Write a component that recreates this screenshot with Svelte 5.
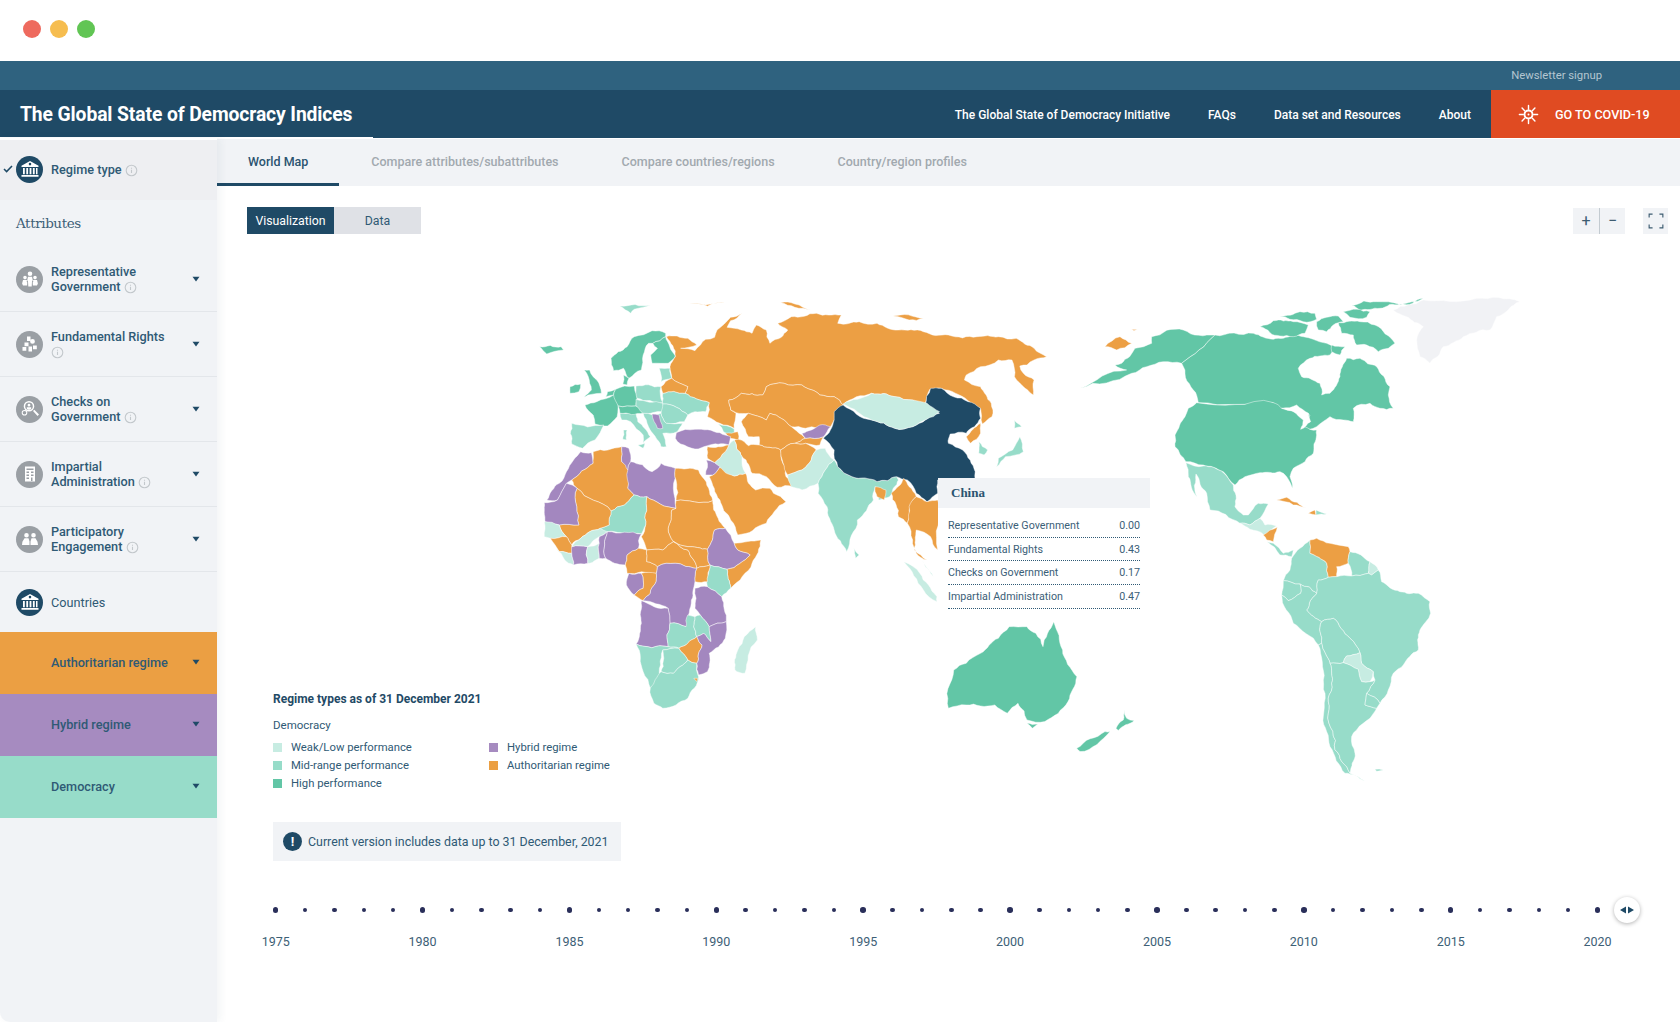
<script>
  const colors = { o: '#ec9f44', p: '#a387bf', m: '#97dcc9', l: '#c7ece2', h: '#62c6a6', c: '#1f4a66', g: '#f1f2f5', w: '#ffffff' };

  // same offset for an edge whichever way round it is walked, so neighbours keep sharing a border
  function mid(a, b) {
    const [p, q] = a[0] < b[0] || (a[0] === b[0] && a[1] < b[1]) ? [a, b] : [b, a];
    const n = Math.sin(p[0] * 12.9898 + p[1] * 78.233 + q[0] * 37.719 + q[1] * 11.131) * 43758.5453;
    const r = (n - Math.floor(n)) * 2 - 1;
    return [(p[0] + q[0]) / 2 - (q[1] - p[1]) * r * 0.1, (p[1] + q[1]) / 2 + (q[0] - p[0]) * r * 0.1];
  }

  function split(a, b, depth) {
    if (depth === 0 || Math.hypot(a[0] - b[0], a[1] - b[1]) < 14) return [];
    const m = mid(a, b);
    return [...split(a, m, depth - 1), m, ...split(m, b, depth - 1)];
  }

  function rough(points) {
    const pts = points.split(' ').map((p) => p.split(',').map(Number));
    return pts
      .flatMap((p, i) => [p, ...split(p, pts[(i + 1) % pts.length], 3)])
      .map((p) => p[0].toFixed(1) + ',' + p[1].toFixed(1))
      .join(' ');
  }

  // traced by hand, old world in its own coordinate frame
  const oldWorld = [
    ['o', '410,170 440,168 470,175 495,195 450,205 490,212 520,178 545,172 552,150 590,112 622,100 590,122 580,142 620,150 650,160 662,135 690,150 700,190 732,172 750,150 722,130 760,110 830,100 900,105 890,130 950,125 1000,130 1060,150 1130,155 1200,165 1280,170 1340,170 1390,175 1440,205 1475,230 1440,240 1420,255 1400,258 1410,280 1440,300 1438,345 1415,325 1385,290 1378,240 1340,240 1290,260 1250,285 1245,300 1290,320 1320,370 1322,410 1295,432 1290,385 1255,362 1180,325 1148,328 1135,372 1100,360 1050,350 985,340 905,375 880,350 840,345 790,315 740,310 690,320 680,345 620,340 585,360 590,390 605,400 600,445 560,430 525,410 530,368 462,340 470,320 425,295 420,260 435,230'],
    ['o', '730,68 770,72 815,90 770,82'],
    ['o', '1045,108 1130,115 1090,120'],
    ['o', '475,72 575,68 520,75'],
    ['o', '585,360 620,340 680,345 690,320 740,310 790,315 840,345 880,350 905,375 880,420 870,440 800,445 760,440 700,400 690,420 640,400 605,398 590,390'],
    ['o', '640,400 690,420 700,400 760,440 790,465 800,475 770,490 730,510 670,495 670,470 640,470 620,425'],
    ['o', '770,490 800,475 850,470 840,495 800,490'],
    ['p', '790,460 840,435 870,440 850,470 800,475'],
    ['m', '555,432 600,447 600,470 570,455'],
    ['o', '575,460 610,455 612,482 590,475'],
    ['p', '438,458 490,448 560,458 590,470 585,495 525,497 490,507 450,492 435,475'],
    ['o', '600,480 612,478 640,497 670,495 730,510 745,590 765,620 720,622 690,590 650,580 622,530'],
    ['o', '730,510 770,490 800,490 830,510 810,550 790,570 750,585'],
    ['l', '760,620 750,585 790,570 810,550 830,510 855,505 880,540 855,570 835,610 790,630'],
    ['m', '880,540 890,560 930,590 1000,605 1055,590 1060,600 1035,650 1005,660 995,620 990,660 945,720 915,815 880,750 860,680 835,640 835,610 855,570'],
    ['c', '850,475 880,420 880,395 905,375 985,420 1050,445 1100,440 1175,400 1135,375 1150,325 1180,325 1255,365 1290,385 1290,415 1250,460 1205,462 1200,490 1240,510 1275,575 1275,600 1170,600 1170,640 1140,665 1110,640 1085,600 1055,590 1000,605 930,590 890,560 880,510'],
    ['l', '905,372 985,340 1050,350 1100,360 1140,370 1175,395 1100,440 1050,445 985,420'],
    ['o', '1290,430 1250,470 1262,490 1290,460'],
    ['m', '1285,485 1310,510 1300,525 1285,520'],
    ['m', '1385,420 1405,440 1385,445'],
    ['m', '1400,470 1410,515 1360,530 1335,560 1340,535 1380,510'],
    ['o', '995,620 1025,630 1020,660 1000,650'],
    ['o', '1040,640 1075,595 1090,620 1110,650 1090,690 1085,730 1060,710'],
    ['o', '1090,680 1110,650 1140,665 1170,660 1170,810 1150,770 1110,750 1105,810 1140,840 1110,820 1100,780 1085,730'],
    ['l', '1075,845 1120,880 1168,950 1168,965 1130,930'],
    ['l', '1125,840 1150,880 1158,890 1135,860'],
    ['m', '935,805 950,825 940,835'],
    ['o', '540,585 560,560 600,588 632,580 640,610 660,630 700,625 710,640 745,665 690,730 610,765 590,720 560,660 530,590'],
    ['l', '585,495 600,480 622,530 632,580 600,588 545,548 575,515'],
    ['o', '525,500 585,495 575,515 545,548 525,535'],
    ['p', '522,540 545,548 560,560 540,585 520,585'],
    // Europe
    ['h', '55,200 115,200 122,210 75,222'],
    ['m', '280,78 365,75 320,88 310,100'],
    ['h', '255,235 275,215 300,200 320,170 370,152 408,160 408,170 372,190 360,190 345,225 340,270 305,295 290,265 262,272'],
    ['h', '408,170 435,228 415,250 370,250 366,225 385,205 372,190'],
    ['h', '180,270 195,270 205,290 215,300 228,340 180,352 200,330 195,310'],
    ['h', '140,320 170,312 165,335 140,340'],
    ['h', '182,375 215,365 262,345 280,362 272,410 245,438 210,432 205,405'],
    ['h', '245,335 268,328 262,345 240,350'],
    ['h', '268,328 320,318 325,378 275,378 262,345'],
    ['h', '290,285 305,295 300,315 288,312'],
    ['m', '145,430 235,435 210,480 175,505 145,492'],
    ['m', '280,400 300,400 325,395 330,425 365,470 345,490 345,465 310,425 285,420'],
    ['m', '330,495 350,490 345,505'],
    ['m', '290,450 300,450 298,480 288,478'],
    ['h', '275,378 325,378 350,385 345,400 280,400'],
    ['m', '325,318 395,320 400,368 328,355'],
    ['m', '325,358 400,370 400,395 345,400 325,378'],
    ['m', '400,340 462,340 530,368 520,395 490,395 470,405 400,372'],
    ['m', '400,372 470,405 460,425 410,430 395,400'],
    ['m', '345,400 395,400 410,430 455,430 440,455 400,460 410,500 395,500 360,440'],
    ['p', '370,402 390,405 400,445 385,445'],
    ['m', '390,265 420,265 425,295 395,305'],
    ['o', '395,320 425,295 470,320 462,340 400,340'],
    // Africa
    ['p', '200,518 170,515 150,540 130,575 110,610 75,660 105,660 130,610 145,600 205,550'],
    ['o', '205,515 285,500 285,545 305,570 302,625 320,645 255,693 160,625 145,600 205,550'],
    ['p', '285,500 305,505 310,545 302,570 285,545'],
    ['p', '302,570 310,545 370,575 395,550 435,565 437,685 355,650 320,645 302,625'],
    ['o', '435,565 500,570 510,590 540,662 437,662'],
    ['o', '437,662 540,662 555,715 575,745 545,750 525,808 470,800 430,785 415,745 425,690 437,685'],
    ['o', '355,650 437,685 425,690 415,745 430,785 400,810 355,810 340,770 352,735'],
    ['m', '255,693 320,645 355,650 352,735 340,762 265,755 245,755 222,770 225,745 250,735'],
    ['o', '160,625 255,693 250,735 225,745 170,775 145,795 130,770 110,735 165,735'],
    ['p', '68,668 105,660 130,610 160,625 165,735 110,735 70,725'],
    ['l', '68,725 110,735 130,770 85,775 68,770'],
    ['o', '85,775 130,770 145,795 145,820 110,815'],
    ['l', '100,805 110,815 145,820 150,855 125,840'],
    ['p', '145,800 190,800 190,850 150,855 145,820'],
    ['l', '170,775 225,745 245,755 222,770 190,800 145,800'],
    ['l', '190,800 222,790 222,835 195,850 190,850'],
    ['p', '222,770 245,755 240,835 222,835 222,790'],
    ['p', '245,755 340,762 332,805 300,825 295,855 265,850 240,835'],
    ['o', '332,805 355,810 355,845 385,860 382,880 300,880 295,855 300,825'],
    ['o', '355,810 400,810 430,785 470,810 495,865 435,850 385,860 355,845'],
    ['o', '430,785 470,800 525,808 532,855 495,865 470,810'],
    ['p', '545,750 575,745 600,790 610,810 645,825 580,868 532,855 525,808'],
    ['o', '600,790 675,780 650,850 590,925 580,868 645,825 610,810'],
    ['m', '532,855 580,868 590,925 565,950 525,920 530,870'],
    ['o', '495,865 532,855 530,870 525,905 490,905'],
    ['p', '305,880 340,880 345,925 320,945 298,915'],
    ['o', '340,880 382,880 365,940 345,962 320,945 345,925'],
    ['p', '385,860 435,850 495,865 490,905 480,960 478,1035 465,1040 420,1030 415,985 345,962 365,940 382,880'],
    ['p', '340,962 415,985 420,1030 415,1100 325,1092 340,1030'],
    ['m', '420,1030 465,1040 470,1005 490,1010 495,1070 445,1105 415,1100'],
    ['p', '490,925 525,920 565,950 578,1025 530,1040 505,1005 490,985'],
    ['m', '505,1005 530,1040 535,1085 515,1060 495,1070 490,1010'],
    ['o', '445,1105 495,1070 510,1095 495,1150 470,1140'],
    ['p', '530,1040 578,1025 575,1075 530,1120 525,1175 500,1185 495,1150 510,1095 495,1070 515,1060 535,1085'],
    ['m', '325,1092 415,1100 445,1105 400,1110 395,1200 365,1225 345,1175'],
    ['m', '400,1110 445,1105 470,1140 430,1180 395,1175'],
    ['m', '365,1225 395,1175 430,1180 470,1140 495,1150 500,1190 470,1255 400,1285 375,1270'],
    ['o', '487,1195 498,1195 495,1205'],
    ['l', '660,1040 665,1080 630,1180 602,1170 610,1110'],
    // Australia
    ['h', '1200,1285 1215,1170 1250,1150 1290,1120 1340,1075 1370,1040 1420,1040 1445,1060 1465,1100 1495,1025 1520,1110 1560,1190 1535,1265 1470,1325 1420,1320 1395,1270 1365,1300 1330,1275 1250,1275'],
    ['h', '1420,1330 1450,1332 1435,1345']
  ];

  const newWorld = [
    ['g', '1000,90 1090,60 1250,55 1380,65 1310,110 1290,150 1210,170 1150,200 1110,250 1080,230 1070,180 1090,140 1040,110'],
    ['o', '135,200 180,170 215,190 170,210'],
    ['o', '215,148 232,148 222,152'],
    ['h', '185,250 225,205 275,190 275,170 370,150 465,165 365,250 310,245 260,260 215,280 60,325 200,270 165,255'],
    ['h', '465,165 580,160 640,178 700,168 760,178 800,190 830,205 810,225 750,235 715,265 725,290 780,310 785,345 810,340 840,290 860,235 900,235 950,260 990,320 985,345 1000,385 960,385 930,370 880,385 880,425 850,420 810,410 770,440 720,450 750,425 745,400 700,390 660,385 640,368 415,368 400,330 365,250'],
    ['h', '600,140 640,122 700,125 745,135 735,160 700,170 660,168 630,158'],
    ['h', '660,108 720,95 765,100 770,118 730,125 690,118'],
    ['h', '875,75 950,65 1090,55 1020,72 960,85 900,92'],
    ['h', '835,128 900,125 945,135 1005,190 985,205 955,215 920,195 890,195 880,165 845,160'],
    ['h', '770,125 800,112 835,108 850,125 820,135 800,155 775,150'],
    ['h', '850,95 930,95 920,112 870,112'],
    ['h', '815,195 855,200 840,225 815,215'],
    ['h', '345,500 345,465 375,410 385,385 410,368 640,368 665,385 700,393 750,405 732,440 770,450 770,465 760,520 735,545 700,565 690,590 697,625 680,590 660,575 600,578 555,590 525,615 490,575 430,555 378,545'],
    ['w', '665,385 710,375 745,400 752,425 722,448 730,420 700,395'],
    ['m', '378,548 430,558 490,578 520,615 525,680 550,705 565,705 595,670 625,672 600,715 570,735 540,730 450,690 440,640 408,582 412,650 385,590'],
    ['l', '540,730 570,735 600,715 615,735 650,738 612,765 570,748'],
    ['o', '610,765 652,742 640,785 620,780'],
    ['m', '622,785 640,790 670,820 700,810 695,830 660,825'],
    ['o', '650,660 680,652 740,685 700,675'],
    ['o', '745,700 765,690 768,705'],
    ['m', '768,690 800,702 768,705'],
    ['m', '695,835 720,805 750,780 750,820 800,850 805,892 775,900 770,940 720,912 670,902 690,870'],
    ['o', '750,780 770,775 810,790 865,800 870,815 865,850 830,860 830,890 805,892 800,850 750,820'],
    ['m', '870,815 930,845 925,880 875,888 865,850'],
    ['l', '930,845 955,870 935,885 925,880'],
    ['m', '775,900 805,892 830,890 875,888 925,880 935,885 955,870 965,905 1020,935 1075,940 1110,965 1112,1000 1080,1050 1075,1110 1030,1155 1000,1180 985,1230 960,1270 920,1240 945,1200 940,1175 905,1150 900,1118 870,1075 820,1015 785,1025 740,990 770,940'],
    ['m', '670,902 720,912 722,940 685,962 665,945'],
    ['m', '685,962 722,940 720,912 770,940 740,990 785,1025 785,1090 775,1095 700,1030 665,945'],
    ['m', '785,1025 820,1015 870,1075 900,1118 860,1128 850,1148 810,1150 785,1090'],
    ['l', '860,1128 900,1118 905,1150 940,1175 930,1205 905,1205 895,1168 850,1148'],
    ['m', '775,1095 785,1090 810,1150 815,1210 805,1300 825,1410 870,1480 915,1503 855,1480 810,1400 790,1310 790,1200'],
    ['m', '810,1150 850,1148 895,1168 905,1205 930,1205 945,1200 920,1240 915,1275 950,1285 930,1315 890,1350 875,1370 885,1420 870,1480 825,1410 805,1300 815,1210'],
    ['m', '920,1240 960,1270 950,1285 915,1275'],
    ['m', '945,1468 970,1470 950,1474'],
    ['h', '192,1290 200,1315 222,1322 175,1352 168,1345 190,1320'],
    ['h', '150,1355 60,1415 50,1405 135,1355']
  ];

  const nav = ['The Global State of Democracy Initiative', 'FAQs', 'Data set and Resources', 'About'];
  const tabs = ['World Map', 'Compare attributes/subattributes', 'Compare countries/regions', 'Country/region profiles'];

  const bank = 'M12 4 20.500 8.800V10h-17V8.800zM12 5.800a1.300 1.300 0 1 0 0 2.600 1.300 1.300 0 0 0 0-2.600zM5 11h1.800v6.200H5zM8.300 11h1.800v6.200H8.300zM11.600 11h1.800v6.200h-1.800zM14.900 11h1.800v6.200h-1.800zM18 11h1.500v6.200H18zM3.500 18h17v1.800h-17z';
  const attributes = [
    { lines: ['Representative', 'Government'], icon: 'M12 4.500a2.300 2.300 0 1 1 0 4.600 2.300 2.300 0 0 1 0-4.600zM10 9.800h4l.8 3.500-.8 1.200-.3 5h-3.400l-.3-5-.8-1.200zM7 8.800a1.800 1.800 0 1 1 0 3.600 1.800 1.800 0 0 1 0-3.600zM5 13h4l-.3 1.500.6 1-.2 3H5l-.9-2zM17 8.800a1.800 1.800 0 1 1 0 3.600 1.800 1.800 0 0 1 0-3.600zM15 13h4l.9 3.500-.9 2h-4.100l-.2-3 .6-1z' },
    { lines: ['Fundamental Rights', ''], icon: 'M9 4.500h3.500V9H9zM14.500 7a2.400 2.400 0 1 1 0 4.800 2.400 2.400 0 0 1 0-4.800zM6.500 10.500h4v3.800h-4zM4.500 15h3.800v3.800H4.500zM10.500 14.500h3.500v5h-3.500zM15 13.500h3.800v3.800H15z' },
    { lines: ['Checks on', 'Government'], icon: 'M11 4a5.300 5.300 0 1 1 0 10.600A5.300 5.300 0 0 1 11 4zm0 1.500a3.800 3.800 0 1 0 0 7.600 3.800 3.800 0 0 0 0-7.600zM11 6.800a1.400 1.400 0 1 1 0 2.800 1.400 1.400 0 0 1 0-2.800zM8.800 10.200h4.400v1.500a3.200 3.200 0 0 1-4.400 0zM15 14l1.300-1.300 4.700 4.700-1.500 1.500zM6.500 13a2.800 2.800 0 1 1 0 5.600 2.800 2.800 0 0 1 0-5.600zm0 1a1.800 1.800 0 1 0 0 3.600 1.800 1.800 0 0 0 0-3.600z' },
    { lines: ['Impartial', 'Administration'], icon: 'M7 4.500h10v15H7zM8.500 6.500V8h7V6.500zM8.500 9.500V11H11V9.500zM13 9.500V11h2.500V9.500zM8.500 12.500V14H11v-1.500zM13 12.500V14h2.500v-1.500zM8.500 15.500V17H11v-1.500zM13 15.500V19h1.500v-3.500z' },
    { lines: ['Participatory', 'Engagement'], icon: 'M8.500 6a2.300 2.300 0 1 1 0 4.600 2.300 2.300 0 0 1 0-4.600zM15.500 6a2.300 2.300 0 1 1 0 4.600 2.300 2.300 0 0 1 0-4.600zM6.500 11.200h4l1 3.300v3.500h-7.500l.4-3.200zM13.500 11.200h4l2 3.600.5 3.200h-7.500v-3.500z' }
  ];
  const regimes = [
    { name: 'Authoritarian regime', cls: 'orange' },
    { name: 'Hybrid regime', cls: 'purple' },
    { name: 'Democracy', cls: 'green' }
  ];
  const scores = [
    ['Representative Government', '0.00'],
    ['Fundamental Rights', '0.43'],
    ['Checks on Government', '0.17'],
    ['Impartial Administration', '0.47']
  ];
  const years = Array.from({ length: 46 }, (_, i) => 1975 + i);
</script>

{#snippet info()}
  <svg class="info" viewBox="0 0 12 12"><circle cx="6" cy="6" r="4.900" fill="none" stroke="#c3c8cc" stroke-width="1" /><path d="M6 5.200v3.200M6 3.400v.9" stroke="#c3c8cc" stroke-width="1" /></svg>
{/snippet}

{#snippet badge(d, dark)}
  <span class="badge" class:dark><svg viewBox="0 0 24 24"><path {d} fill="#fff" fill-rule="evenodd" /></svg></span>
{/snippet}

{#snippet caret()}
  <svg class="caret" viewBox="0 0 8 6"><path d="M.5.800h7L4 5.400z" /></svg>
{/snippet}

<div class="window">
  <div class="titlebar">
    <span class="light red"></span>
    <span class="light yellow"></span>
    <span class="light lime"></span>
  </div>

  <div class="topbar"><a href="#news">Newsletter signup</a></div>

  <header>
    <h1>The Global State of Democracy Indices</h1>
    <nav>
      {#each nav as item}
        <a href="#nav">{item}</a>
      {/each}
    </nav>
    <button class="covid">
      <svg viewBox="0 0 24 24" fill="none" stroke="#fff" stroke-width="1.500" stroke-linecap="round">
        <circle cx="12" cy="12" r="4.200" stroke-width="2" />
        <circle cx="12" cy="12" r="1" fill="#fff" stroke="none" />
        <path d="M12 2.500v4M12 17.500v4M2.500 12h4M17.500 12h4M5.300 5.300l2.700 2.700M16 16l2.700 2.700M18.700 5.300 16 8M8 16l-2.700 2.700" />
      </svg>
      GO TO COVID-19
    </button>
  </header>

  <div class="body">
    <aside>
      <div class="regime-type">
        <svg class="check" viewBox="0 0 10 8"><path d="M1 4l2.600 2.600L9 1" fill="none" stroke="#1f4a66" stroke-width="1.500" /></svg>
        {@render badge(bank, true)}
        <span class="label">Regime type {@render info()}</span>
      </div>
      <h2>Attributes</h2>
      {#each attributes as a}
        <div class="attr">
          {@render badge(a.icon, false)}
          <span class="label">
            {a.lines[0]}<br />
            {a.lines[1]} {@render info()}
          </span>
          {@render caret()}
        </div>
      {/each}
      <div class="countries">
        {@render badge(bank, true)}
        <span class="label">Countries</span>
      </div>
      {#each regimes as r}
        <div class="regime {r.cls}">
          <span>{r.name}</span>
          {@render caret()}
        </div>
      {/each}
    </aside>

    <main>
      <svg class="map" viewBox="217 138 1463 884">
        <g transform="translate(520 280) scale(.357 .3333)">
          {#each oldWorld as s}
            <polygon points={rough(s[1])} fill={colors[s[0]]} />
          {/each}
        </g>
        <g transform="translate(1060 280) scale(.3333)">
          {#each newWorld as s}
            <polygon points={rough(s[1])} fill={colors[s[0]]} />
          {/each}
        </g>
      </svg>

      <div class="tabs">
        {#each tabs as t, i}
          <a href="#tab" class:active={i === 0}>{t}</a>
        {/each}
      </div>

      <div class="toolbar">
        <div class="switch">
          <button class="on">Visualization</button>
          <button>Data</button>
        </div>
        <div class="zoom">
          <button>+</button>
          <button>&minus;</button>
        </div>
        <button class="full" aria-label="Fullscreen">
          <svg viewBox="0 0 14 14" fill="none" stroke="#3d5c70" stroke-width="1"><path d="M1 4V1h3M10 1h3v3M13 10v3h-3M4 13H1v-3" /></svg>
        </button>
      </div>

      <div class="tooltip">
        <h3>China</h3>
        {#each scores as row}
          <div class="score"><span>{row[0]}</span><span>{row[1]}</span></div>
        {/each}
      </div>

      <section class="legend">
        <h4>Regime types as of 31 December 2021</h4>
        <p>Democracy</p>
        <div class="keys">
          <div class="key"><i class="k-l"></i>Weak/Low performance</div>
          <div class="key"><i class="k-p"></i>Hybrid regime</div>
          <div class="key"><i class="k-m"></i>Mid-range performance</div>
          <div class="key"><i class="k-o"></i>Authoritarian regime</div>
          <div class="key"><i class="k-h"></i>High performance</div>
        </div>
      </section>

      <div class="notice">
        <span class="bang">!</span>
        Current version includes data up to 31 December, 2021
      </div>

      <div class="timeline">
        {#each years as y}
          <div class="tick" class:major={(y - 1975) % 5 === 0}>
            <span class="dot"></span>
            {#if (y - 1975) % 5 === 0}<span class="year">{y}</span>{/if}
          </div>
        {/each}
        <div class="tick">
          <span class="handle"><svg viewBox="0 0 16 8"><path d="M7 .5v7L1 4zM9 .5v7L15 4z" fill="#1f4a66" /></svg></span>
        </div>
      </div>
    </main>
  </div>
</div>

<style>
  :global(body) {
    margin: 0;
    background: #fff;
  }

  .window {
    width: 1680px;
    height: 1022px;
    overflow: hidden;
    display: flex;
    flex-direction: column;
    font-family: Roboto, "Liberation Sans", sans-serif;
    color: #2f5a75;
  }

  .titlebar {
    height: 61px;
    flex: none;
    display: flex;
    align-items: center;
    gap: 9px;
    padding: 0 0 3px 23px;
    box-sizing: border-box;
  }

  .light {
    width: 18px;
    height: 18px;
    border-radius: 50%;
  }
  .red { background: #ee6a5e; }
  .yellow { background: #f6bd4f; }
  .lime { background: #61c554; }

  .topbar {
    height: 29px;
    flex: none;
    background: #2f627f;
    display: flex;
    align-items: center;
    justify-content: flex-end;
    padding-right: 78px;
  }

  .topbar a {
    color: #b4c6d1;
    font-size: 11.300px;
    text-decoration: none;
  }

  header {
    position: relative;
    height: 48px;
    flex: none;
    background: #1f4a66;
    display: flex;
    align-items: center;
  }

  header::after {
    content: '';
    position: absolute;
    left: 0;
    bottom: 0;
    width: 373px;
    height: 1px;
    background: #fff;
  }

  h1 {
    margin: 0 0 0 20px;
    font-size: 19.300px;
    font-weight: 700;
    color: #fff;
    letter-spacing: -.1px;
  }

  nav {
    display: flex;
    gap: 38px;
    margin: 1px 20px 0 auto;
  }

  nav a {
    color: #fff;
    font-size: 12px;
    font-weight: 500;
    text-decoration: none;
  }

  .covid {
    width: 189px;
    height: 48px;
    border: 0;
    background: #e04b22;
    color: #fff;
    font: 500 12.600px Roboto, sans-serif;
    display: flex;
    align-items: center;
    gap: 15px;
    padding: 0 0 0 26px;
  }

  .covid svg {
    width: 23px;
    height: 23px;
  }

  .body {
    flex: 1;
    display: flex;
    min-height: 0;
  }

  aside {
    width: 217px;
    flex: none;
    background: #f1f3f6;
    border-top: 2px solid #fff;
    box-shadow: 3px 0 8px rgba(40, 60, 80, .06);
    border-bottom-left-radius: 10px;
    position: relative;
    z-index: 2;
  }

  .regime-type {
    height: 60px;
    box-sizing: border-box;
    padding: 0 0 2px 16px;
    background: #eeeff2;
    display: flex;
    align-items: center;
    gap: 8px;
    position: relative;
  }

  .check {
    position: absolute;
    left: 3px;
    top: 25px;
    width: 10px;
    height: 8px;
  }

  .badge {
    width: 27px;
    height: 27px;
    flex: none;
    border-radius: 50%;
    background: #9a9fa4;
    display: flex;
    align-items: center;
    justify-content: center;
  }
  .badge.dark { background: #1f4a66; }
  .badge svg {
    width: 24px;
    height: 24px;
  }

  .label {
    font-size: 12.700px;
    font-weight: 500;
    line-height: 15px;
    color: #2f5a75;
  }

  .info {
    width: 13px;
    height: 13px;
    vertical-align: -3px;
  }

  h2 {
    margin: 0;
    height: 47px;
    padding: 15px 0 0 16px;
    box-sizing: border-box;
    font: 400 13.500px "DejaVu Serif", "Liberation Serif", serif;
    letter-spacing: -.4px;
    color: #3d6076;
  }

  .attr {
    height: 65px;
    box-sizing: border-box;
    border-bottom: 1px solid #e3e6ea;
    display: flex;
    align-items: center;
    padding-left: 16px;
    gap: 8px;
  }

  .caret {
    width: 8px;
    height: 6px;
    margin-left: auto;
    margin-right: 17px;
    fill: #1f4a66;
  }

  .countries {
    height: 60px;
    display: flex;
    align-items: center;
    padding-left: 16px;
    gap: 8px;
  }
  .countries .label { font-weight: 400; }

  .regime {
    height: 62px;
    box-sizing: border-box;
    display: flex;
    align-items: center;
    padding: 0 0 2px 51px;
    font-size: 12.700px;
    font-weight: 500;
    color: #2f5a75;
  }
  .orange { background: #eb9f43; }
  .purple { background: #a68bc0; }
  .green { background: #97dcc9; }

  main {
    flex: 1;
    position: relative;
    min-width: 0;
  }

  .map {
    position: absolute;
    inset: 0;
    width: 100%;
    height: 100%;
  }

  .map polygon {
    stroke: rgba(255, 255, 255, .65);
    stroke-width: .7px;
    stroke-linejoin: round;
    vector-effect: non-scaling-stroke;
  }

  .tabs {
    position: relative;
    height: 48px;
    box-sizing: border-box;
    background: #f1f3f6;
    border-top: 1px solid #fff;
    display: flex;
  }

  .tabs a {
    display: flex;
    align-items: center;
    padding: 0 31px;
    font-size: 12.500px;
    font-weight: 500;
    color: #a1a9af;
    text-decoration: none;
    margin-right: 1px;
    box-sizing: border-box;
    border-bottom: 3px solid transparent;
  }

  .tabs a.active {
    color: #2b5470;
    border-bottom-color: #1f4a66;
  }

  .toolbar {
    position: relative;
    display: flex;
    align-items: center;
    padding: 21px 12px 0 30px;
  }

  .switch {
    display: flex;
    margin-right: auto;
  }

  .switch button {
    width: 87px;
    height: 27px;
    border: 0;
    padding: 0;
    background: #dfe1e6;
    color: #2f5a75;
    font: 400 12.300px Roboto, sans-serif;
  }
  .switch .on {
    background: #1f4a66;
    color: #fff;
  }

  .zoom {
    display: flex;
    margin-right: 18px;
  }

  .zoom button {
    width: 26px;
    height: 26px;
    border: 0;
    padding: 0;
    background: #f1f3f6;
    color: #3d5c70;
    font: 400 16px Roboto, sans-serif;
  }
  .zoom button + button { border-left: 1px solid #c3cbd1; }

  .full {
    width: 25px;
    height: 26px;
    border: 0;
    padding: 0;
    background: #f1f3f6;
    display: flex;
    align-items: center;
    justify-content: center;
  }
  .full svg {
    width: 16px;
    height: 16px;
  }

  .tooltip {
    position: absolute;
    left: 721px;
    top: 340px;
    width: 212px;
    background: #fff;
    padding-bottom: 10px;
  }

  .tooltip h3 {
    margin: 0 0 6px;
    height: 30px;
    background: #f1f3f6;
    padding-left: 13px;
    font: 700 13px/29px "Liberation Serif", serif;
    color: #2b5470;
  }

  .score {
    display: flex;
    justify-content: space-between;
    margin: 0 10px;
    height: 23.700px;
    box-sizing: border-box;
    padding-top: 5px;
    border-bottom: 1px dotted #2f5a75;
    font-size: 10.700px;
    color: #3b6078;
  }

  .legend {
    position: relative;
    margin: 457px 0 0 56px;
  }

  .legend h4 {
    margin: 0;
    font-size: 12px;
    font-weight: 700;
    line-height: 16px;
    color: #1f4a66;
  }

  .legend p {
    margin: 10px 0 5px;
    font-size: 11.500px;
    line-height: 16px;
  }

  .keys {
    display: grid;
    grid-template-columns: 216px 1fr;
    width: 360px;
    grid-auto-rows: 18.300px;
    align-items: center;
  }

  .key {
    display: flex;
    align-items: center;
    font-size: 11.300px;
    gap: 9px;
  }

  .key i {
    width: 9px;
    height: 9px;
  }
  .k-l { background: #c7ece2; }
  .k-m { background: #97dcc9; }
  .k-h { background: #62c6a6; }
  .k-p { background: #a68bc0; }
  .k-o { background: #eb9f43; }

  .notice {
    position: relative;
    margin: 29px 0 0 56px;
    width: 348px;
    height: 39px;
    box-sizing: border-box;
    background: #f1f3f6;
    display: flex;
    align-items: center;
    padding-left: 10px;
    gap: 6px;
    font-size: 12.400px;
    white-space: nowrap;
  }

  .bang {
    width: 19px;
    height: 19px;
    border-radius: 50%;
    background: #1f4a66;
    color: #fff;
    font-size: 13px;
    font-weight: 700;
    text-align: center;
    line-height: 19px;
  }

  .timeline {
    position: relative;
    display: flex;
    margin: 41px 0 0 44px;
  }

  .tick {
    width: 29.380px;
    height: 16px;
    position: relative;
    display: flex;
    justify-content: center;
    align-items: center;
  }

  .dot {
    width: 4.500px;
    height: 4.500px;
    border-radius: 50%;
    background: #2a2f5a;
  }
  .major .dot {
    width: 5.500px;
    height: 5.500px;
  }

  .year {
    position: absolute;
    top: 32px;
    left: 50%;
    transform: translateX(-50%);
    font-size: 12.500px;
    color: #3d6076;
  }

  .handle {
    width: 26px;
    height: 26px;
    flex: none;
    border-radius: 50%;
    background: #fff;
    box-shadow: 0 1px 4px rgba(0, 0, 0, .3);
    display: flex;
    align-items: center;
    justify-content: center;
  }
  .handle svg {
    width: 16px;
    height: 8px;
  }
</style>
